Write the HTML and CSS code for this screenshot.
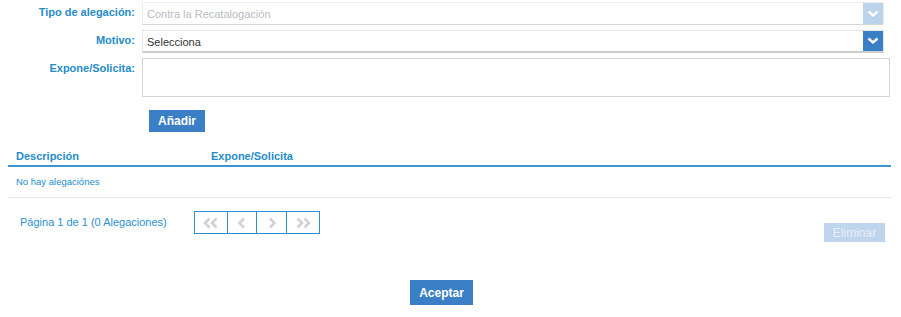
FILE: index.html
```html
<!DOCTYPE html>
<html lang="es">
<head>
  <meta charset="UTF-8" />
  <title>Alegaciones</title>
  <link rel="stylesheet" href="styles.css">
</head>
<body>
  <div class="panel">
    <div class="field-row row-tipo">
      <label class="field-label">Tipo de alegación:</label>
      <div class="select disabled">
        <span class="select-text">Contra la Recatalogación</span>
        <span class="select-arrow">
          <svg width="12" height="8" viewBox="0 0 12 8"><path d="M1.5 1.5 L6 5.5 L10.5 1.5" fill="none" stroke="#fff" stroke-width="2.4"/></svg>
        </span>
      </div>
    </div>
    <div class="field-row row-motivo">
      <label class="field-label">Motivo:</label>
      <div class="select">
        <span class="select-text">Selecciona</span>
        <span class="select-arrow">
          <svg width="12" height="8" viewBox="0 0 12 8"><path d="M1.5 1.5 L6 5.5 L10.5 1.5" fill="none" stroke="#fff" stroke-width="2.4"/></svg>
        </span>
      </div>
    </div>
    <div class="field-row row-expone">
      <label class="field-label">Expone/Solicita:</label>
      <div class="textarea"></div>
    </div>

    <div class="add-row">
      <button class="btn">Añadir</button>
    </div>

    <div class="grid">
      <div class="grid-head">
        <span class="col-desc">Descripción</span>
        <span class="col-exp">Expone/Solicita</span>
      </div>
      <div class="grid-empty">No hay alegaciónes</div>
    </div>

    <div class="pager-row">
      <span class="pager-info">Página 1 de 1 (0 Alegaciones)</span>
      <div class="pager">
        <span class="pager-cell first">
          <svg width="18" height="12" viewBox="0 0 18 12"><path d="M7.5 1.5 L3 6 L7.5 10.5 M14.5 1.5 L10 6 L14.5 10.5" fill="none" stroke="#d2d2d2" stroke-width="2.6"/></svg>
        </span>
        <span class="pager-cell prev">
          <svg width="10" height="12" viewBox="0 0 10 12"><path d="M7 1.5 L2.5 6 L7 10.5" fill="none" stroke="#d2d2d2" stroke-width="2.6"/></svg>
        </span>
        <span class="pager-cell next">
          <svg width="10" height="12" viewBox="0 0 10 12"><path d="M3 1.5 L7.5 6 L3 10.5" fill="none" stroke="#d2d2d2" stroke-width="2.6"/></svg>
        </span>
        <span class="pager-cell last">
          <svg width="18" height="12" viewBox="0 0 18 12"><path d="M3.5 1.5 L8 6 L3.5 10.5 M10.5 1.5 L15 6 L10.5 10.5" fill="none" stroke="#d2d2d2" stroke-width="2.6"/></svg>
        </span>
      </div>
      <button class="btn btn-disabled btn-delete">Eliminar</button>
    </div>

    <div class="accept-row">
      <button class="btn btn-accept">Aceptar</button>
    </div>
  </div>
</body>
</html>
```

FILE: styles.css
```css
body {
  margin: 0;
  background: #fff;
  font-family: "Liberation Sans", Arial, sans-serif;
  font-size: 11px;
  color: #333;
}

.panel {
  padding: 2px 0 0 0;
  width: 901px;
}

/* form rows */
.field-row {
  display: flex;
  align-items: flex-start;
  margin-bottom: 5px;
}

.field-label {
  width: 135px;
  padding-right: 7px;
  text-align: right;
  font-weight: bold;
  color: #258ccb;
  font-size: 11px;
}

.row-tipo .field-label,
.row-motivo .field-label {
  line-height: 21px;
}

.row-expone .field-label {
  line-height: 14px;
  padding-top: 3px;
}

.select {
  display: flex;
  width: 742px;
  height: 23px;
  box-sizing: border-box;
  border: 1px solid #ececec;
  border-bottom-color: #d7d7d7;
  background: #fff;
}

.select-text {
  flex: 1;
  padding-left: 4px;
  line-height: 23px;
  color: #333;
  font-size: 11px;
}

.select.disabled .select-text {
  color: #b7bcc2;
}

.select-arrow {
  width: 20px;
  display: flex;
  align-items: center;
  justify-content: center;
  background: #3a7ec6;
}

.select.disabled .select-arrow {
  background: #bcd3ec;
}

.row-motivo .select {
  border-color: #e6e6e6;
  border-bottom: 2px solid #cdcdcd;
}

.textarea {
  width: 748px;
  height: 39px;
  box-sizing: border-box;
  border: 1px solid #d3d3d3;
  background: #fff;
}

/* buttons */
.btn {
  border: none;
  background: #3b7fc6;
  color: #fff;
  font-family: "Liberation Sans", Arial, sans-serif;
  font-size: 12px;
  font-weight: bold;
  padding: 0;
  height: 22px;
}

.add-row {
  padding: 8px 0 0 149px;
}

.add-row .btn {
  width: 56px;
}

/* grid */
.grid {
  margin: 15px 10px 0 8px;
}

.grid-head {
  display: flex;
  height: 15px;
  padding-top: 3px;
  border-bottom: 2px solid #3c96d0;
  font-weight: bold;
  color: #258ccb;
  font-size: 11px;
}

.col-desc {
  box-sizing: border-box;
  width: 203px;
  padding-left: 8px;
}

.grid-empty {
  height: 30px;
  line-height: 30px;
  padding-left: 8px;
  font-size: 9.5px;
  color: #258ccb;
  border-bottom: 1px solid #e9e9e9;
}

/* pager */
.pager-row {
  display: flex;
  align-items: flex-start;
  margin-top: 13px;
  padding: 0 16px 0 20px;
  height: 31px;
}

.pager-info {
  color: #2b8fd0;
  font-size: 11px;
  line-height: 22px;
  width: 174px;
}

.pager {
  display: flex;
  border: 1px solid #2b8fd0;
  height: 21px;
}

.pager-cell {
  display: flex;
  align-items: center;
  justify-content: center;
  border-left: 1px solid #2b8fd0;
  height: 21px;
}

.pager-cell.first { border-left: none; width: 32px; }
.pager-cell.prev { width: 28px; }
.pager-cell.next { width: 29px; }
.pager-cell.last { width: 32px; }

.btn-disabled {
  background: #bed5ed;
  color: #e6eef8;
  font-weight: normal;
}

.btn-delete {
  margin-left: auto;
  align-self: flex-end;
  width: 61px;
  height: 19px;
}

/* accept */
.accept-row {
  padding: 38px 0 0 410px;
}

.btn-accept {
  width: 63px;
  height: 25px;
}
```
